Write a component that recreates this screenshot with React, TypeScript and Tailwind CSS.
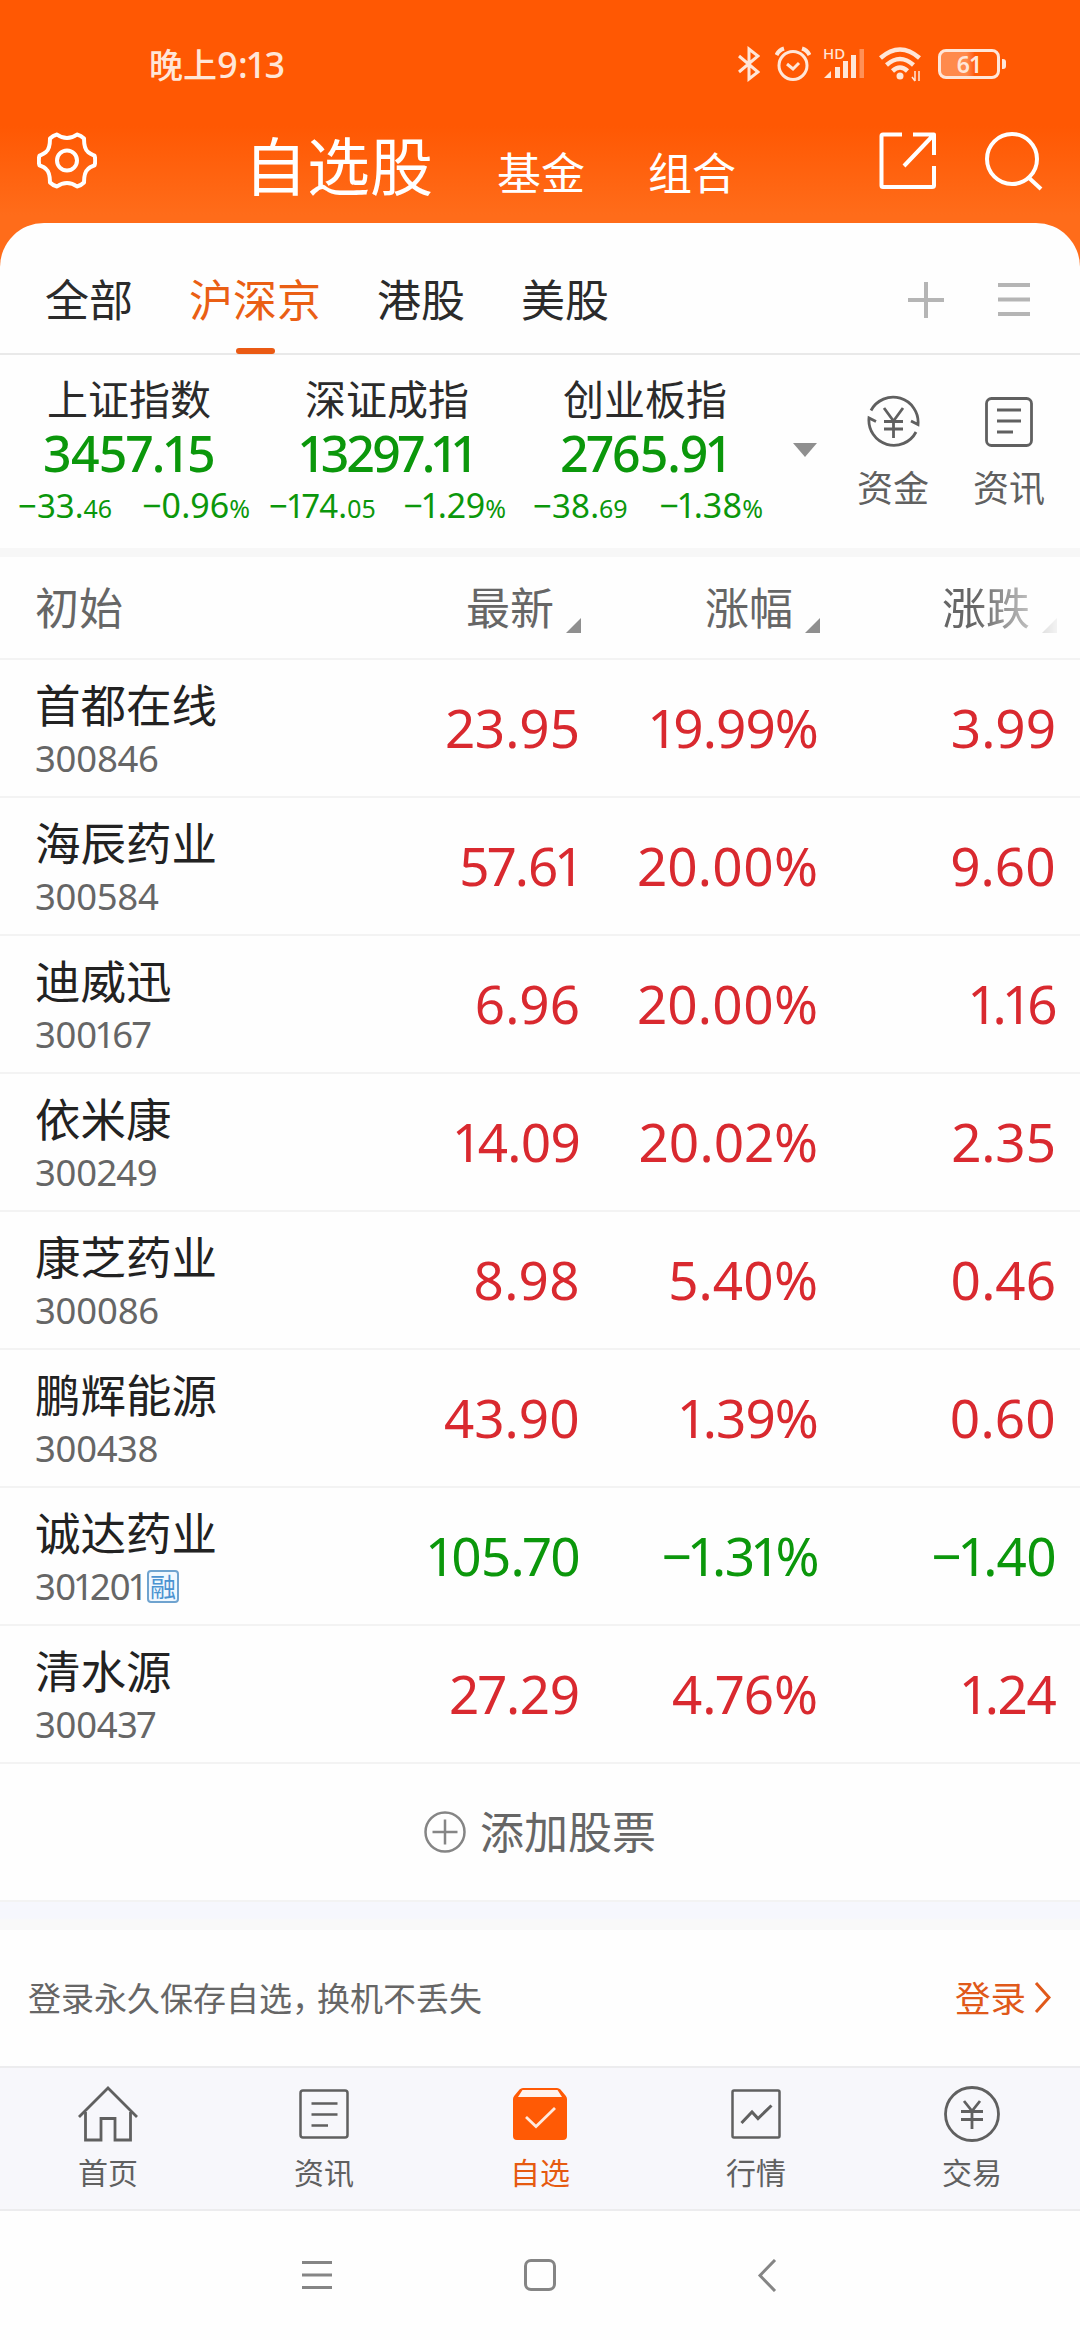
import React from 'react';

const UP = 'text-[#d9292f]';
const DOWN = 'text-[#0b970b]';

const marketTabs = ['全部', '沪深京', '港股', '美股'];

const indices = [
  { name: '上证指数', value: '3457.15', tracking: 'tracking-[-0.8px]', diff: '−33.', diffSmall: '46', pct: '−0.96', pad: 'pl-[18px] pr-[8px]' },
  { name: '深证成指', value: '13297.11', tracking: 'tracking-[-2.6px]', diff: '−174.', diffSmall: '05', pct: '−1.29', pad: 'pl-[11px] pr-[10px]' },
  { name: '创业板指', value: '2765.91', tracking: 'tracking-[-1.2px]', diff: '−38.', diffSmall: '69', pct: '−1.38', pad: 'pl-[17px] pr-[11px]' }
];

const stocks = [
  { name: '首都在线', code: '300846', price: '23.95', pct: '19.99%', diff: '3.99', up: true },
  { name: '海辰药业', code: '300584', price: '57.61', pct: '20.00%', diff: '9.60', up: true },
  { name: '迪威迅', code: '300167', price: '6.96', pct: '20.00%', diff: '1.16', up: true },
  { name: '依米康', code: '300249', price: '14.09', pct: '20.02%', diff: '2.35', up: true },
  { name: '康芝药业', code: '300086', price: '8.98', pct: '5.40%', diff: '0.46', up: true },
  { name: '鹏辉能源', code: '300438', price: '43.90', pct: '1.39%', diff: '0.60', up: true },
  { name: '诚达药业', code: '301201', price: '105.70', pct: '−1.31%', diff: '−1.40', up: false, margin: true },
  { name: '清水源', code: '300437', price: '27.29', pct: '4.76%', diff: '1.24', up: true }
];

// numbers with narrow 1s are set a little tighter
const tight = (value: string) => {
  const ones = value.split('1').length - 1;
  if (ones > 1) return 'tracking-[-1.5px]';
  if (ones === 1) return 'tracking-[-0.9px]';
  return '';
};

const StatusBar = () => (
  <div className="h-[128px] pl-[149px] pr-[74px] flex items-center justify-between text-[#ffe6d8]">
    <div className="text-[34px] leading-[40px] font-medium">
      晚上<span className="font-['Noto_Sans',sans-serif] text-[36px] proportional-nums">9:13</span>
    </div>
    <div className="flex items-center">
      <svg className="w-[22px] h-[36px] mr-[15px]" viewBox="0 0 22 36" fill="none" stroke="currentColor" strokeWidth="3">
        <path d="M1 10 L20 26 L11 33 V3 L20 10 L1 26" />
      </svg>
      <svg className="w-[36px] h-[36px] mr-[12px]" viewBox="0 0 36 36" fill="none" stroke="currentColor" strokeWidth="3">
        <circle cx="18" cy="19.500" r="14" />
        <path d="M12 18 L18 23 L24 17" />
        <path d="M1.500 9 Q4 4 9 2.500 M34.500 9 Q32 4 27 2.500" strokeWidth="4" />
      </svg>
      <svg className="w-[42px] h-[36px] mr-[14px] overflow-visible" viewBox="0 0 42 36" fill="currentColor">
        <text x="0" y="13" fontSize="15" fontWeight="500" fontFamily="Noto Sans">HD</text>
        <path d="M1 32 L8 25 V32 Z" />
        <rect x="12" y="21" width="5" height="11" />
        <rect x="20" y="15" width="5" height="17" />
        <rect x="28" y="9" width="5" height="23" />
        <rect x="36.500" y="3" width="4.500" height="29" opacity="0.4" />
      </svg>
      <svg className="w-[42px] h-[36px] mr-[17px]" viewBox="0 0 42 36" fill="none" stroke="currentColor" strokeWidth="4.500">
        <path d="M1.500 12 Q21 -5 40.500 12" />
        <path d="M7.500 19 Q21 7 34.500 19" />
        <path d="M13.500 25 Q21 18 28.500 25" />
        <circle cx="21" cy="30" r="3.500" fill="currentColor" stroke="none" />
        <path d="M36 25 V35 M40 25 V35 M33 31 L36 35" strokeWidth="1.500" />
      </svg>
      <div className="flex items-center">
        <div className="w-[62px] h-[30px] rounded-[8px] border-[3.5px] border-current bg-linear-to-r from-[#ff8a4c] from-45% to-[#ff5a04] to-60% flex items-center justify-center">
          <span className="font-['Noto_Sans',sans-serif] font-semibold text-[23px] leading-[24px] tracking-[-1px]">61</span>
        </div>
        <div className="ml-[2px] w-[4px] h-[10px] rounded-r-[3px] bg-current"></div>
      </div>
    </div>
  </div>
);

const NavHeader = () => (
  <div className="h-[95px] pl-[37px] pr-[37px] flex items-start text-white">
    <svg className="mt-[4px] w-[60px] h-[57px]" viewBox="0 0 60 57" fill="none" stroke="currentColor" strokeWidth="4" strokeLinejoin="round">
      <path d="M20 2.500 C24 5.500 26 6 30 6 C34 6 36 5.500 40 2.500 C42 3 45 4.500 47 6.500 C47 13 48.500 18 51 20 C53 22 55 22.500 57.500 23.500 C58.500 27 58.500 30 57.500 33.500 C55 34.500 53 35 51 37 C48.500 39 47 44 47 50.500 C45 52.500 42 54 40 54.500 C36 51.500 34 51 30 51 C26 51 24 51.500 20 54.500 C18 54 15 52.500 13 50.500 C13 44 11.500 39 9 37 C7 35 5 34.500 2.500 33.500 C1.500 30 1.500 27 2.500 23.500 C5 22.500 7 22 9 20 C11.500 18 13 13 13 6.500 C15 4.500 18 3 20 2.500 Z" />
      <circle cx="30" cy="28.500" r="10" />
    </svg>
    <div className="ml-[147px] flex items-baseline leading-[70px]">
      <span className="text-[63px]">自选股</span>
      <span className="ml-[64px] text-[44px]">基金</span>
      <span className="ml-[63px] text-[44px]">组合</span>
    </div>
    <svg className="ml-auto mt-[4px] w-[58px] h-[58px]" viewBox="0 0 58 58" fill="none" stroke="currentColor" strokeWidth="4" strokeLinejoin="round">
      <path d="M23 2.500 H4 Q2.500 2.500 2.500 4 V53.500 Q2.500 55 4 55 H53 Q55 55 55 53.500 V34" />
      <path d="M34 2.500 H55 V23 M55 2.500 L25 34" />
    </svg>
    <svg className="ml-[48px] mt-[3px] w-[58px] h-[60px]" viewBox="0 0 58 60" fill="none" stroke="currentColor" strokeWidth="4">
      <circle cx="27" cy="28" r="25" />
      <path d="M43 46 L56 58" />
    </svg>
  </div>
);

const NewsIcon = ({ className }: { className: string }) => (
  <svg className={className} viewBox="0 0 50 50" fill="none" stroke="currentColor" strokeWidth="2.5">
    <rect x="1.500" y="1.500" width="47" height="47" rx="2.500" />
    <path d="M12.500 14.500 H38.500 M12.500 25.500 H38.500 M12.500 36.500 H29" />
  </svg>
);

const IndexPanel = () => (
  <div className="h-[193px] flex">
    {indices.map((item) => (
      <div key={item.name} className="w-[258px] pt-[14px]">
        <div className="text-[41px] leading-[56px] text-center text-[#2b2b2b]">{item.name}</div>
        <div className={`${DOWN} font-['Noto_Sans',sans-serif] proportional-nums`}>
          <div className={`text-[50px] leading-[56px] text-center font-medium ${item.tracking}`}>{item.value}</div>
          <div className={`flex items-baseline justify-between text-[33px] leading-[46px] mt-px ${item.pad}`}>
            <span>{item.diff}<span className="text-[25px]">{item.diffSmall}</span></span>
            <span className="text-[34px]">{item.pct}<span className="text-[25px]">%</span></span>
          </div>
        </div>
      </div>
    ))}
    <svg className="ml-[19px] mt-[88px] w-[24px] h-[14px]" viewBox="0 0 24 14">
      <path d="M0 0 H24 L12 14 Z" fill="#8f8f8f" />
    </svg>
    <div className="ml-[40px] flex text-[#606060] text-[36px] leading-[44px] gap-[44px]">
      <div className="w-[72px] flex flex-col items-center">
        <svg className="mt-[40px] mb-[16px] w-[53px] h-[53px]" viewBox="0 0 53 53" fill="none" stroke="currentColor" strokeWidth="2.800">
          <path d="M4 15.500 A25 25 0 0 1 51 29.500 L44 26" />
          <path d="M49 37 A25 25 0 0 1 2 23 L9 26.500" />
          <path d="M17 13 L26.500 26 L36 13 M26.500 26 V43 M17 26.500 H36 M17 34 H36" />
        </svg>
        <span>资金</span>
      </div>
      <div className="w-[72px] flex flex-col items-center">
        <svg className="mt-[42px] mb-[17px] w-[48px] h-[50px]" viewBox="0 0 48 50" fill="none" stroke="currentColor" strokeWidth="2.800">
          <rect x="1.500" y="1.500" width="45" height="47" rx="5" />
          <path d="M12 13 H36 M12 24 H36 M12 35 H28" />
        </svg>
        <span>资讯</span>
      </div>
    </div>
  </div>
);

const SortMark = () => (
  <svg className="w-[15px] h-[15px]" viewBox="0 0 15 15">
    <path d="M15 0 V15 H0 Z" fill="#8f8f8f" />
  </svg>
);

const TableHeader = () => (
  <div className="h-[101px] pl-[35px] flex text-[44px] leading-[99px] text-[#666]">
    <div className="w-[431px]">初始</div>
    <div className="flex w-[239px]">
      最新<span className="ml-[12px] pt-[61px]"><SortMark /></span>
    </div>
    <div className="flex w-[237px]">
      涨幅<span className="ml-[12px] pt-[61px]"><SortMark /></span>
    </div>
    <div className="flex mask-[linear-gradient(90deg,#000_34px,transparent_124px)] w-[122px]">
      涨跌<span className="ml-[12px] pt-[61px]"><SortMark /></span>
    </div>
  </div>
);

const StockTable = () => (
  <div>
    {stocks.map((s) => (
      <div key={s.code} className="h-[138px] pl-[35px] flex border-t-2 border-[#f3f3f3]">
        <div className="w-[244px] pt-[13px]">
          <div className="text-[45.500px] leading-[60px] text-[#222]">{s.name}</div>
          <div className="flex items-center h-[48px] mt-px">
            <span className={`font-['Noto_Sans',sans-serif] proportional-nums text-[36.500px] leading-[48px] text-[#666] ${s.margin ? 'tracking-[-1px]' : 'tracking-[-0.6px]'}`}>{s.code}</span>
            {s.margin && (
              <span className="ml-[2px] w-[32px] h-[33px] rounded-[4px] border-2 border-[#6fa3cf] bg-[#f0f8ff] text-[#4b93d1] text-[26px] leading-[27px] flex justify-center">融</span>
            )}
          </div>
        </div>
        <div className={`flex font-['Noto_Sans',sans-serif] proportional-nums text-[53px] leading-[135px] text-right ${s.up ? UP : DOWN}`}>
          <div className={`w-[301px] ${tight(s.price)}`}>{s.price}</div>
          <div className={`w-[238px] ${tight(s.pct)}`}>{s.pct}</div>
          <div className={`w-[238px] ${tight(s.diff)}`}>{s.diff}</div>
        </div>
      </div>
    ))}
  </div>
);

const tabItems = [
  {
    label: '首页',
    icon: (
      <svg className="w-[60px] h-[56px]" viewBox="0 0 60 56" fill="none" stroke="currentColor" strokeWidth="2.800">
        <path d="M1 31 L30 2 L59 31" />
        <path d="M7.500 26 V54 H23 V32.500 H37 V54 H52.500 V26" />
      </svg>
    )
  },
  { label: '资讯', icon: <NewsIcon className="w-[50px] h-[50px]" /> },
  {
    label: '自选',
    active: true,
    icon: (
      <svg className="w-[54px] h-[52px]" viewBox="0 0 54 52">
        <path d="M10 0 H44 Q46 0 47.500 1.500 L52.500 7.500 Q54 9 54 11 V48 Q54 52 50 52 H4 Q0 52 0 48 V11 Q0 9 1.500 7.500 L6.500 1.500 Q8 0 10 0 Z" fill="#ff5a05" />
        <path d="M9.500 2 H44.500 L49 9 H5 Z" fill="#fff3ec" />
        <path d="M13 29 L23 38.500 L42 20" fill="none" stroke="#ffe9dd" strokeWidth="2.800" />
      </svg>
    )
  },
  {
    label: '行情',
    icon: (
      <svg className="w-[50px] h-[50px]" viewBox="0 0 50 50" fill="none" stroke="currentColor" strokeWidth="2.500">
        <rect x="1.500" y="1.500" width="47" height="47" rx="1.500" />
        <path d="M10.500 34 L21 23 L27 29.500 L40.500 16.500" strokeWidth="3" />
      </svg>
    )
  },
  {
    label: '交易',
    icon: (
      <svg className="w-[56px] h-[56px]" viewBox="0 0 56 56" fill="none" stroke="currentColor" strokeWidth="2.800">
        <circle cx="28" cy="28" r="26.500" />
        <path d="M20 15 L28 25 L36 15 M28 25 V43 M17 25.500 H39 M17 33.500 H39" />
      </svg>
    )
  }
];

const TabBar = () => (
  <div className="h-[145px] grid grid-cols-5 bg-[#f7f7fb] border-y-2 border-[#ececee]">
    {tabItems.map((tab) => (
      <div key={tab.label} className={`flex flex-col items-center ${tab.active ? 'text-[#e65a10]' : 'text-[#606060]'}`}>
        <div className="mt-[17px] h-[58px] flex items-center">{tab.icon}</div>
        <div className="mt-[8px] text-[30px] leading-[40px]">{tab.label}</div>
      </div>
    ))}
  </div>
);

const SystemNav = () => (
  <div className="h-[129px] pl-[302px] flex text-[#858585] bg-[#fefefe]">
    <svg className="mt-[48px] w-[30px] h-[32px]" viewBox="0 0 30 32" stroke="currentColor" strokeWidth="3">
      <path d="M0 3.500 H30 M0 16 H30 M0 28.500 H30" />
    </svg>
    <div className="ml-[192px] mt-[48px] w-[32px] h-[32px] rounded-[7px] border-[3px] border-current"></div>
    <svg className="ml-[201px] mt-[48px] w-[20px] h-[33px]" viewBox="0 0 20 33" fill="none" stroke="currentColor" strokeWidth="3">
      <path d="M18 1 L3 16.500 L18 32" />
    </svg>
  </div>
);

const App = () => {
  return (
    <div className="w-[1080px] h-[2340px] overflow-hidden bg-[linear-gradient(#ff5803_0px,#ff5803_126px,#ff6c1a_215px,#ff6c1a_100%)] font-['Noto_Sans_CJK_SC',sans-serif]">
      <StatusBar />
      <NavHeader />
      <div className="rounded-t-[44px] bg-[#fefefe]">
        <div className="h-[132px] pl-[45px] pr-[50px] flex items-start border-b-2 border-[#e9e9e9]">
          <div className="flex gap-[56px] text-[44px] leading-[64px] text-[#2b2b2b]">
            {marketTabs.map((tab) => (
              <div key={tab} className={`pt-[43px] flex flex-col items-center ${tab === '沪深京' ? 'text-[#ea5f14]' : ''}`}>
                {tab}
                {tab === '沪深京' && <div className="mt-[18px] w-[39px] h-[6px] rounded-full bg-[#ea5a14]"></div>}
              </div>
            ))}
          </div>
          <svg className="ml-auto mt-[59px] w-[36px] h-[36px]" viewBox="0 0 36 36" stroke="#b5b5b5" strokeWidth="4">
            <path d="M0 18 H36 M18 0 V36" />
          </svg>
          <svg className="ml-[54px] mt-[59px] w-[32px] h-[36px]" viewBox="0 0 32 36" stroke="#b5b5b5" strokeWidth="4">
            <path d="M0 3 H32 M0 17.500 H32 M0 32 H32" />
          </svg>
        </div>
        <IndexPanel />
        <div className="h-[9px] bg-[#f7f7f7]"></div>
        <TableHeader />
        <StockTable />
        <div className="h-[140px] border-y-2 border-[#f3f3f3] pl-[424px] flex items-center text-[44px] leading-[60px] text-[#666]">
          <svg className="w-[42px] h-[42px] mr-[14px]" viewBox="0 0 42 42" fill="none" stroke="#858585" strokeWidth="2.500">
            <circle cx="21" cy="21" r="19.500" />
            <path d="M8.500 21 H33.500 M21 8.500 V33.500" />
          </svg>
          <span className="-mt-[4px]">添加股票</span>
        </div>
        <div className="h-[28px] bg-[linear-gradient(#f6f7fd_0px,#f6f7fd_16px,#f9f9f9_18px,#f9f9f9_100%)]"></div>
        <div className="h-[136px] pl-[28px] pr-[29px] pb-[2px] flex items-center justify-between leading-[44px]">
          <span className="text-[33px] text-[#666]">登录永久保存自选<span className="tracking-[-8px]">，</span>换机不丢失</span>
          <span className="flex items-center text-[35.500px] text-[#e0591a]">
            登录
            <svg className="ml-[8px] w-[17px] h-[31px]" viewBox="0 0 17 31" fill="none" stroke="currentColor" strokeWidth="3">
              <path d="M2 1 L15 15.500 L2 30" />
            </svg>
          </span>
        </div>
        <TabBar />
        <SystemNav />
      </div>
    </div>
  );
};

export default App;
